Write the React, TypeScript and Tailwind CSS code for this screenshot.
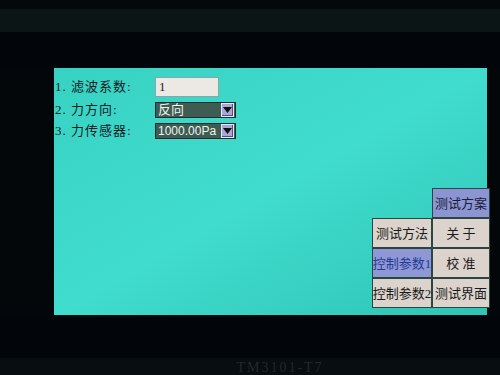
import React from 'react';

const cjk = { fontFamily: '"Liberation Serif", "Noto Sans CJK SC", serif' };

function Arrow() {
  return (
    <span className="flex h-[14px] w-[13px] shrink-0 items-center justify-center border border-[#e8e8f4] bg-[#a8a6da] shadow-[inset_-1px_-1px_0_#50507a]">
      <svg width="9" height="6" viewBox="0 0 9 6">
        <polygon points="0,0 9,0 4.5,6" fill="#111" />
      </svg>
    </span>
  );
}

function Select({ value, mono }: { value: string; mono?: boolean }) {
  return (
    <div className="flex h-[16px] w-[81px] items-center justify-between border border-[#1e2e2a] bg-[#3e5c52] pl-[2px] pr-px">
      <span
        className={`${mono ? 'text-[12px]' : 'text-[13px]'} whitespace-nowrap leading-none text-[#f2f2f2]`}
        style={mono ? { fontFamily: '"Liberation Sans", "Noto Sans CJK SC", sans-serif' } : cjk}
      >
        {value}
      </span>
      <Arrow />
    </div>
  );
}

const buttons = [
  { label: '', kind: 'none' },
  { label: '测试方案', kind: 'blue' },
  { label: '测试方法', kind: 'beige' },
  { label: '关 于', kind: 'beige' },
  { label: '控制参数1', kind: 'blueText' },
  { label: '校 准', kind: 'beige' },
  { label: '控制参数2', kind: 'beige' },
  { label: '测试界面', kind: 'beige' },
];

export default function App() {
  return (
    <div className="flex h-[375px] w-[500px] flex-col overflow-hidden bg-[#03070a]">
      <div className="h-[9px] bg-[#04080a]" />
      <div className="h-[23px] bg-[#0c1515]" />
      <div className="h-[36px] bg-[#02060a]" />
      <div className="ml-[54px] flex h-[247px] w-[433px] flex-col bg-gradient-to-br from-[#38d2c3] via-[#40dccd] to-[#2ec4b6]">
        <div className="flex flex-col pl-px pt-[9px] text-[13px] text-[#14201f]" style={cjk}>
          <div className="flex h-[20px] items-center">
            <span className="w-[100px] tracking-[1px]">1. 滤波系数:</span>
            <div className="flex h-[20px] w-[64px] items-center border border-[#8aa6a0] bg-[#ece8e4] pl-[3px] text-[13px] text-[#222]">
              1
            </div>
          </div>
          <div className="mt-[4px] flex h-[17px] items-center">
            <span className="w-[100px] tracking-[1px]">2. 力方向:</span>
            <Select value="反向" />
          </div>
          <div className="mt-[4px] flex h-[17px] items-center">
            <span className="w-[100px] tracking-[1px]">3. 力传感器:</span>
            <Select value="1000.00Pa" mono />
          </div>
        </div>
        <div className="mt-auto mb-[7px] -mr-[3px] grid grid-cols-[60px_58px] grid-rows-[30px_30px_30px_30px] self-end">
          {buttons.map((b, i) =>
            b.kind === 'none' ? (
              <div key={i} />
            ) : (
              <div
                key={i}
                className={`flex items-center justify-center whitespace-nowrap border border-[#2c4442] text-[13px] leading-none ${
                  b.kind === 'blue'
                    ? 'bg-[#8c94d2] text-[#1a1e3a]'
                    : b.kind === 'blueText'
                    ? 'bg-[#8e98d4] text-[#283a96]'
                    : 'bg-[#dcd4cc] text-[#1a1a1a]'
                }`}
                style={cjk}
              >
                {b.label}
              </div>
            )
          )}
        </div>
      </div>
      <div className="h-[43px] bg-[#02050a]" />
      <div className="flex h-[17px] items-end justify-center bg-[#070d10] pl-[60px]">
        <span className="text-[14px] leading-none tracking-[2px] text-[#23282c]" style={{ fontFamily: '"Liberation Serif", serif' }}>
          TM3101-T7
        </span>
      </div>
    </div>
  );
}
